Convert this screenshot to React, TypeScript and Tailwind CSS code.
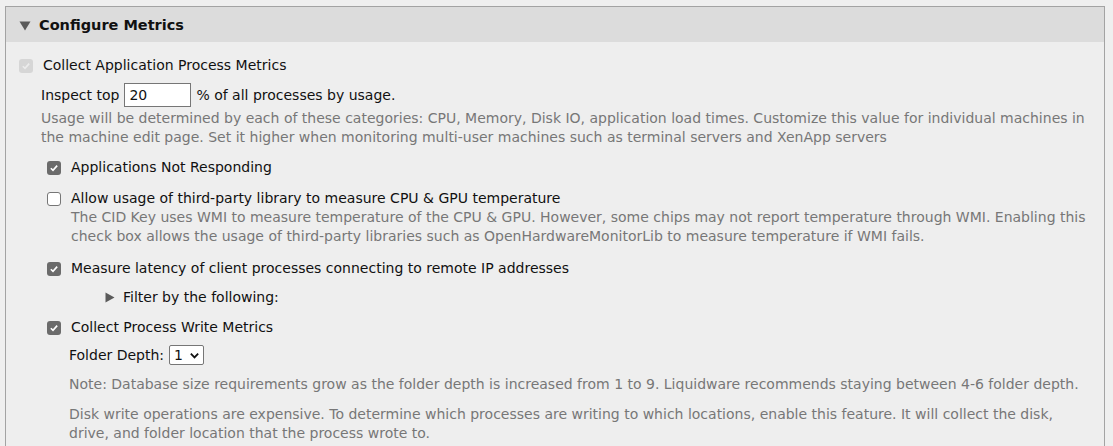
import React from 'react';

const font = { fontFamily: '"DejaVu Sans", Verdana, sans-serif' };

function Box({ checked, disabled }: { checked?: boolean; disabled?: boolean }) {
  if (disabled) {
    return (
      <span className="inline-flex h-[14px] w-[14px] shrink-0 items-center justify-center rounded-[3px] bg-[#d6d6d6]">
        <svg viewBox="0 0 12 12" className="h-[10px] w-[10px]">
          <path d="M2.2 6.3 4.8 8.8 9.8 3.2" fill="none" stroke="#ececec" strokeWidth="2" />
        </svg>
      </span>
    );
  }
  if (checked) {
    return (
      <span className="inline-flex h-[14px] w-[14px] shrink-0 items-center justify-center rounded-[3px] bg-[#6b6b6b]">
        <svg viewBox="0 0 12 12" className="h-[10px] w-[10px]">
          <path d="M2.2 6.3 4.8 8.8 9.8 3.2" fill="none" stroke="#fff" strokeWidth="2" />
        </svg>
      </span>
    );
  }
  return <span className="inline-block h-[14px] w-[14px] shrink-0 rounded-[3px] border border-[#767676] bg-white" />;
}

function Option({ checked, label }: { checked?: boolean; label: string }) {
  return (
    <div className="flex items-center gap-[10px] pl-[41px]">
      <Box checked={checked} />
      <span className="text-[14px] text-[#111]">{label}</span>
    </div>
  );
}

export default function App() {
  return (
    <div className="min-h-[446px] bg-[#efefef] pl-[5px] pr-[8px] pt-[6px]" style={font}>
      <div className="border border-b-0 border-[#a3a3a3] bg-[#eeeeee]">
        <div className="flex h-[35px] items-center gap-[8px] bg-[#dcdcdc] pl-[13px] pt-[2px]">
          <svg viewBox="0 0 12 10" className="h-[10px] w-[12px]">
            <path d="M0.5 0.5 H11.5 L6 9.5 Z" fill="#5a5a5a" />
          </svg>
          <span className="text-[14.5px] font-bold text-[#111]">Configure Metrics</span>
        </div>

        <div className="pb-4 pt-[14px] leading-[19px]">
          <div className="flex items-center gap-[10px] pl-[13px]">
            <Box disabled />
            <span className="text-[14px] text-[#111]">Collect Application Process Metrics</span>
          </div>

          <div className="mt-[8px] flex items-center pl-[35px] text-[14px] text-[#111]">
            <span>Inspect top</span>
            <input
              defaultValue="20"
              className="mx-[5px] h-[24px] w-[67px] border border-[#767676] bg-white px-[4px] text-[14px] outline-none"
            />
            <span>% of all processes by usage.</span>
          </div>
          <p className="mt-[2px] pl-[35px] pr-4 text-[14px] text-[#777]">
            Usage will be determined by each of these categories: CPU, Memory, Disk IO, application load times. Customize this value for individual machines in the machine edit page. Set it higher when monitoring multi-user machines such as terminal servers and XenApp servers
          </p>

          <div className="mt-[11px]">
            <Option checked label="Applications Not Responding" />
          </div>

          <div className="mt-[12px]">
            <Option label="Allow usage of third-party library to measure CPU & GPU temperature" />
            <p className="pl-[65px] pr-2 text-[14px] text-[#777]">
              The CID Key uses WMI to measure temperature of the CPU &amp; GPU. However, some chips may not report temperature through WMI. Enabling this check box allows the usage of third-party libraries such as OpenHardwareMonitorLib to measure temperature if WMI fails.
            </p>
          </div>

          <div className="mt-[13px]">
            <Option checked label="Measure latency of client processes connecting to remote IP addresses" />
          </div>

          <div className="mt-[10px] flex items-center gap-[8px] pl-[99px] text-[14px] text-[#111]">
            <svg viewBox="0 0 10 11" className="h-[11px] w-[10px]">
              <path d="M0.5 0.5 V10.5 L9.5 5.5 Z" fill="#5a5a5a" />
            </svg>
            <span>Filter by the following:</span>
          </div>

          <div className="mt-[11px]">
            <Option checked label="Collect Process Write Metrics" />
          </div>

          <div className="mt-[8px] flex items-center gap-[5px] pl-[63px] text-[14px] text-[#111]">
            <span>Folder Depth:</span>
            <span className="inline-flex h-[20px] w-[35px] items-center justify-between rounded-[2px] border border-[#767676] bg-white pl-[4px] pr-[3px] text-[14px]">
              1
              <svg viewBox="0 0 12 12" className="h-[11px] w-[11px]">
                <path d="M2 4 6 8 10 4" fill="none" stroke="#111" strokeWidth="2" />
              </svg>
            </span>
          </div>

          <p className="mt-[10px] pl-[63px] text-[14px] text-[#777]">
            Note: Database size requirements grow as the folder depth is increased from 1 to 9. Liquidware recommends staying between 4-6 folder depth.
          </p>
          <p className="mt-[11px] pl-[63px] pr-4 text-[14px] text-[#777]">
            Disk write operations are expensive. To determine which processes are writing to which locations, enable this feature. It will collect the disk, drive, and folder location that the process wrote to.
          </p>
        </div>
      </div>
    </div>
  );
}
